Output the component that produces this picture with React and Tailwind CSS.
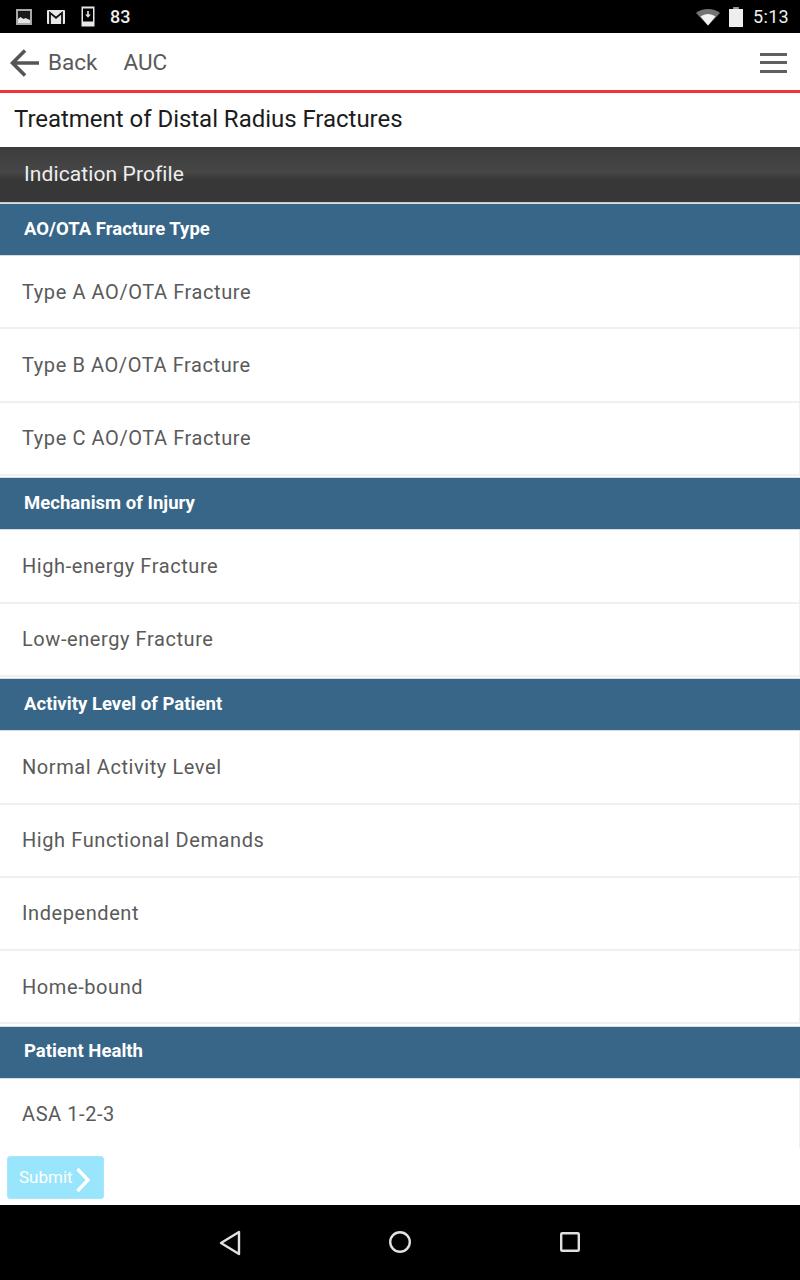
import React from "react";

const Section = ({ title, items }) => (
  <section className="mb-[1.5px]">
    <h2 className="h-[53px] flex items-center pl-6 bg-[#386688] border-y border-[#d5dde2] text-white text-[18.5px] font-bold tracking-[0.03px]">
      {title}
    </h2>
    {items.map((item, i) => (
      <div
        key={item}
        className={`h-[73.25px] flex items-center pl-[22px] text-[20px] tracking-[0.58px] text-[#5a5a5a] border-r border-[#f0f0f0] ${i < items.length - 1 ? "border-b-2 border-[#e6e6e6]" : "border-b-2 border-[#dedede]"}`}
      >
        {item}
      </div>
    ))}
  </section>
);

export default function App() {
  return (
    <div className="w-[800px] h-[1280px] flex flex-col bg-white overflow-hidden font-['Roboto',sans-serif]">
      {/* Status bar */}
      <div className="h-[33px] shrink-0 bg-black flex items-center text-[#eeeeee]">
        <svg width="18" height="18" viewBox="0 0 18 18" className="ml-[15px]">
          <rect x="2" y="2" width="14" height="14" fill="#1a1a1a" stroke="#a8a8a8" strokeWidth="2" />
          <path d="M3 15v-4l2.500-2 3 2 2-1 4.500 2v3z" fill="#e4e4e4" />
        </svg>
        <svg width="20" height="16" viewBox="0 0 20 16" className="ml-[13px]">
          <rect x="1" y="1" width="18" height="14" rx="1" fill="#e8e8e8" />
          <path d="M4 15V3.800l6 5 6-5V15" fill="none" stroke="#111111" strokeWidth="1.800" />
        </svg>
        <svg width="16" height="22" viewBox="0 0 16 22" className="ml-[14px]">
          <path d="M1.500 0.500h13v20h-13z" fill="#e8e8e8" />
          <rect x="3" y="2.500" width="10" height="13" fill="#000" />
          <path d="M8 5v5" stroke="#e8e8e8" strokeWidth="1.600" fill="none" />
          <path d="M5.200 8.500h5.600L8 11.800z" fill="#e8e8e8" />
        </svg>
        <span className="ml-[14px] text-[18px] font-medium">83</span>
        <div className="ml-auto flex items-center">
          <svg width="24" height="18" viewBox="0 0 24 18">
            <path d="M0 5C6-.5 18-.5 24 5L12 17.500z" fill="#e8e8e8" opacity="0.5" />
            <path d="M4.500 8.500C9 5 15 5 19.500 8.500L12 17.500z" fill="#f2f2f2" />
          </svg>
          <svg width="14" height="20" viewBox="0 0 14 20" className="ml-[9px]">
            <path d="M4.500 0h5v2H14v18H0V2h4.500z" fill="#eeeeee" />
            <path d="M4.500 0h5v2h-5z" fill="#999999" />
          </svg>
          <span className="ml-[10px] mr-[11px] text-[18px] tracking-[0.3px]">5:13</span>
        </div>
      </div>

      {/* Nav */}
      <div className="h-[60px] shrink-0 bg-white border-b-[3px] border-[#f0323c] flex items-center pt-[2px] text-[#5a5a5a] text-[22.500px]">
        <svg width="30" height="30" viewBox="0 0 30 30" className="ml-[10px]" fill="none" stroke="#555555" strokeWidth="3.600">
          <path d="M29 15H3M15 2.500 2.500 15 15 27.500" />
        </svg>
        <span className="ml-[8px]">Back</span>
        <span className="ml-[26px]">AUC</span>
        <div className="ml-auto mr-[13px] flex flex-col gap-[5.500px]">
          <div className="w-[27px] h-[3px] bg-[#606060]" />
          <div className="w-[27px] h-[3px] bg-[#606060]" />
          <div className="w-[27px] h-[3px] bg-[#606060]" />
        </div>
      </div>

      {/* Title */}
      <h1 className="h-[54px] shrink-0 flex items-center pb-[2px] pl-[14px] text-[24px] tracking-[-0.03px] text-[#1c1c1c]">
        Treatment of Distal Radius Fractures
      </h1>

      {/* Indication header */}
      <div className="h-[56px] shrink-0 flex items-center pl-6 border-b border-[#cccccc] text-[#eeeeee] text-[21px] tracking-[0.1px] bg-[linear-gradient(to_bottom,#3c3c3c_0%,#464646_45%,#373737_60%,#373737_100%)]">
        Indication Profile
      </div>

      {/* Scrolling list */}
      <div className="flex-1 min-h-0 relative overflow-hidden">
        <Section
          title="AO/OTA Fracture Type"
          items={["Type A AO/OTA Fracture", "Type B AO/OTA Fracture", "Type C AO/OTA Fracture"]}
        />
        <Section title="Mechanism of Injury" items={["High-energy Fracture", "Low-energy Fracture"]} />
        <Section
          title="Activity Level of Patient"
          items={["Normal Activity Level", "High Functional Demands", "Independent", "Home-bound"]}
        />
        <Section title="Patient Health" items={["ASA 1-2-3"]} />

        {/* Submit overlay */}
        <div className="absolute left-0 right-0 bottom-0 h-[57px] bg-white">
          <button className="absolute left-[7px] top-[8px] w-[97px] h-[43px] rounded-[3px] bg-[#99e6fc] border border-[#a9e6f7] flex items-center pl-[11px] text-white text-[17px]">
            Submit
            <svg width="16" height="26" viewBox="0 0 16 26" className="ml-[2px] mt-[5px]" fill="none" stroke="#ffffff" strokeWidth="3.400">
              <path d="M2.500 2 13 13 2.500 24" />
            </svg>
          </button>
        </div>
      </div>

      {/* Android nav bar */}
      <div className="h-[75px] shrink-0 bg-black relative">
        <svg width="24" height="26" viewBox="0 0 24 26" className="absolute left-[219px] top-[25px]" fill="none" stroke="#e0e0e0" strokeWidth="2.400" strokeLinejoin="round">
          <path d="M20 2v22L2 13z" />
        </svg>
        <svg width="26" height="26" viewBox="0 0 26 26" className="absolute left-[387px] top-[24px]" fill="none" stroke="#e0e0e0" strokeWidth="2.400">
          <circle cx="13" cy="13" r="9.800" />
        </svg>
        <svg width="24" height="24" viewBox="0 0 24 24" className="absolute left-[558px] top-[25px]" fill="none" stroke="#e0e0e0" strokeWidth="2.400" strokeLinejoin="round">
          <rect x="3.200" y="3.200" width="17.600" height="17.600" rx="1" />
        </svg>
      </div>
    </div>
  );
}
